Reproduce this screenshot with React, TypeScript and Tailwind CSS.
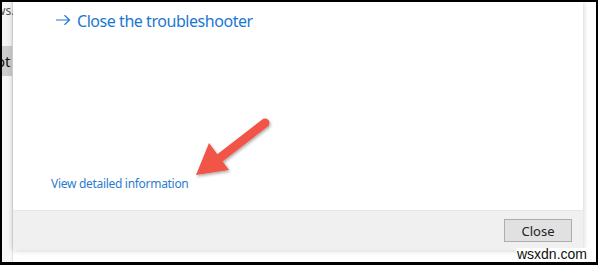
import React from 'react';

const font = { fontFamily: '"Noto Sans", "Open Sans", sans-serif' };

export default function App() {
  return (
    <div className="w-[598px] h-[265px] bg-black pt-[2px] pl-[2px] pr-[2px] pb-[3px]" style={font}>
      <div className="relative w-full h-full bg-white flex overflow-hidden">
        {/* window behind the dialog */}
        <div className="w-[11px] shrink-0 flex flex-col bg-[#f4f4f4] border-r border-[#e2e2e2]">
          <div className="h-[18px] pt-[2px] text-[12px] leading-[14px] text-[#555] whitespace-nowrap -ml-[6px]">ws.</div>
          <div className="h-[26px]" />
          <div className="h-[30px] bg-[#cccccc] text-[15px] leading-[30px] text-[#111] whitespace-nowrap -ml-[6px]">ot</div>
          <div className="flex-1 bg-[#f7f7f7]" />
        </div>

        {/* troubleshooter dialog */}
        <div className="w-[570px] h-[248px] shrink-0 flex flex-col bg-white shadow-[0_0_6px_rgba(0,0,0,0.22)] z-10">
          <div className="flex-1 flex flex-col justify-between pl-[42px] pt-[8px] pb-[18px]">
            <div className="flex items-center gap-[6px] text-[16px] leading-[22px] tracking-[-0.45px] text-[#1a78d2]">
              <svg width="16" height="12" viewBox="0 0 16 12" className="mb-[3px]">
                <path d="M1 6 H14.5 M9.5 1.2 L14.5 6 L9.5 10.8" fill="none" stroke="#1a78d2" strokeWidth="1.2" />
              </svg>
              <span>Close the troubleshooter</span>
            </div>
            <div className="-ml-[4px] text-[12px] leading-[16px] tracking-[-0.3px] text-[#2c7ccd]">View detailed information</div>
          </div>
          <div className="h-[40px] shrink-0 bg-[#f0f0f0] border-t border-[#e6e6e6] flex justify-end items-start pt-[8px] pr-[11px]">
            <button className="w-[68px] h-[23px] bg-[#e1e1e1] border border-[#adadad] text-[13px] leading-[20px] text-[#222]">
              Close
            </button>
          </div>
        </div>

        {/* red callout arrow */}
        <svg className="absolute left-[186px] top-[110px] z-20" width="92" height="72" viewBox="0 0 92 72">
          <defs>
            <filter id="sh" x="-20%" y="-20%" width="140%" height="140%">
              <feDropShadow dx="1" dy="1.5" stdDeviation="1.5" floodColor="#000" floodOpacity="0.35" />
            </filter>
          </defs>
          <g filter="url(#sh)">
            <line x1="77" y1="11" x2="24" y2="52" stroke="#f05546" strokeWidth="9" strokeLinecap="round" />
            <polygon points="8,63 21,31 41,58" fill="#f05546" />
          </g>
        </svg>

        {/* watermark */}
        <div className="absolute right-[8px] bottom-[1px] z-30 bg-white px-[1px] text-[14px] leading-[13px] text-[#111]" style={{ fontFamily: '"Liberation Sans", Arial, sans-serif' }}>
          wsxdn.com
        </div>
      </div>
    </div>
  );
}
